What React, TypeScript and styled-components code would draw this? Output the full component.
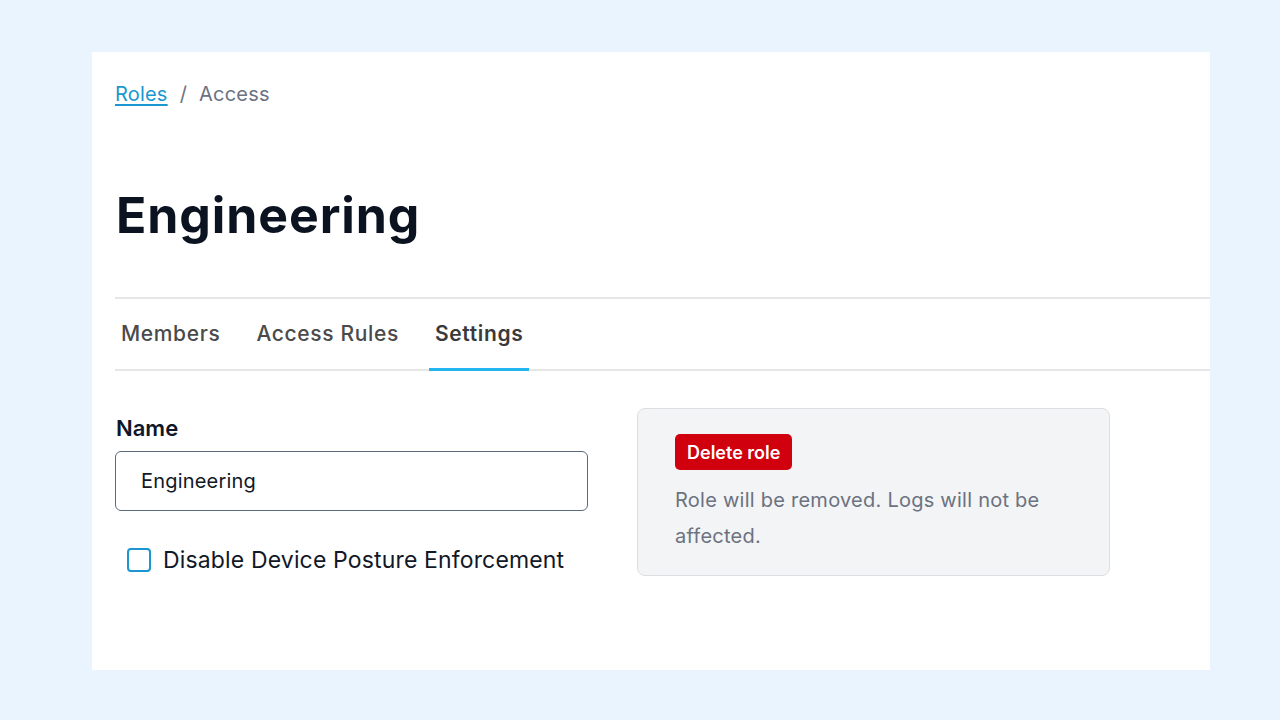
import React from "react";
import styled, {createGlobalStyle} from "styled-components";

const GlobalStyle = createGlobalStyle`
  html, body {
    margin: 0;
    padding: 0;
    background: #eaf4fe;
    font-family: Inter, "Noto Sans", sans-serif;
  }
`

const Page = styled.div`
  width: 1280px;
  height: 720px;
  padding: 52px 70px 50px 92px;
  box-sizing: border-box;
`

const Card = styled.div`
  background: #ffffff;
  height: 618px;
  padding: 26px 0 0 23px;
  box-sizing: border-box;
`

const Breadcrumb = styled.nav`
  display: flex;
  align-items: center;
  gap: 12px;
  font-size: 20px;
  letter-spacing: 0.2px;
  color: #6b7280;
  height: 32px;
`

const Crumb = styled.a`
  color: #1a97d0;
  text-decoration: underline;
  text-underline-offset: 3px;
`

const Title = styled.h1`
  margin: 75px 0 0 1px;
  font-size: 50px;
  font-weight: 700;
  color: #0b1320;
  letter-spacing: 0.9px;
  line-height: 60px;
`

const Tabs = styled.div`
  display: flex;
  margin-top: 52px;
  border-top: 2px solid #e6e6e6;
  border-bottom: 2px solid #e6e6e6;
  height: 74px;
  box-sizing: border-box;
`

const Tab = styled.div<{ $active?: boolean }>`
  display: flex;
  align-items: center;
  padding: 0 6px;
  margin-right: 24px;
  font-size: 21px;
  letter-spacing: 0.65px;
  font-weight: ${p => p.$active ? 600 : 500};
  color: ${p => p.$active ? '#3a3a3a' : '#4a4a4a'};
  border-bottom: 3px solid ${p => p.$active ? '#22b5ef' : 'transparent'};
  margin-bottom: -2px;
`

const Body = styled.div`
  display: flex;
  gap: 49px;
  margin-top: 36px;
`

const Form = styled.div`
  width: 473px;
  padding-top: 8px;
`

const Label = styled.div`
  font-size: 22px;
  font-weight: 600;
  color: #0f172a;
  margin-left: 1px;
  height: 25px;
`

const Input = styled.div`
  margin-top: 11px;
  height: 60px;
  box-sizing: border-box;
  border: 1.5px solid #5b6b7d;
  border-radius: 6px;
  padding: 0 25px;
  display: flex;
  align-items: center;
  font-size: 20px;
  letter-spacing: 0.2px;
  color: #111827;
`

const CheckRow = styled.label`
  display: flex;
  align-items: center;
  gap: 12px;
  margin: 35px 0 0 12px;
  font-size: 23px;
  letter-spacing: 0.15px;
  color: #111827;
`

const Box = styled.span`
  width: 20px;
  height: 20px;
  border: 2.5px solid #1a97d0;
  border-radius: 4px;
`

const Danger = styled.div`
  width: 473px;
  height: 168px;
  box-sizing: border-box;
  background: #f3f4f6;
  border: 1.5px solid #dcdde0;
  border-radius: 8px;
  padding: 25px 37px;
  margin-top: 1px;
`

const DeleteButton = styled.button`
  background: #d0000e;
  color: #ffffff;
  border: none;
  border-radius: 5px;
  height: 36px;
  padding: 0 12px;
  font-family: Inter, "Noto Sans", sans-serif;
  font-size: 18px;
  font-weight: 600;
`

const Note = styled.p`
  margin: 12px 0 0;
  font-size: 20px;
  letter-spacing: 0.25px;
  line-height: 36px;
  color: #6b7280;
`

export default function App() {
    return (
        <Page>
            <GlobalStyle/>
            <Card>
                <Breadcrumb>
                    <Crumb>Roles</Crumb>
                    <span>/</span>
                    <span>Access</span>
                </Breadcrumb>
                <Title>Engineering</Title>
                <Tabs>
                    <Tab>Members</Tab>
                    <Tab>Access Rules</Tab>
                    <Tab $active>Settings</Tab>
                </Tabs>
                <Body>
                    <Form>
                        <Label>Name</Label>
                        <Input>Engineering</Input>
                        <CheckRow>
                            <Box/>
                            Disable Device Posture Enforcement
                        </CheckRow>
                    </Form>
                    <Danger>
                        <DeleteButton>Delete role</DeleteButton>
                        <Note>Role will be removed. Logs will not be affected.</Note>
                    </Danger>
                </Body>
            </Card>
        </Page>
    )
}
